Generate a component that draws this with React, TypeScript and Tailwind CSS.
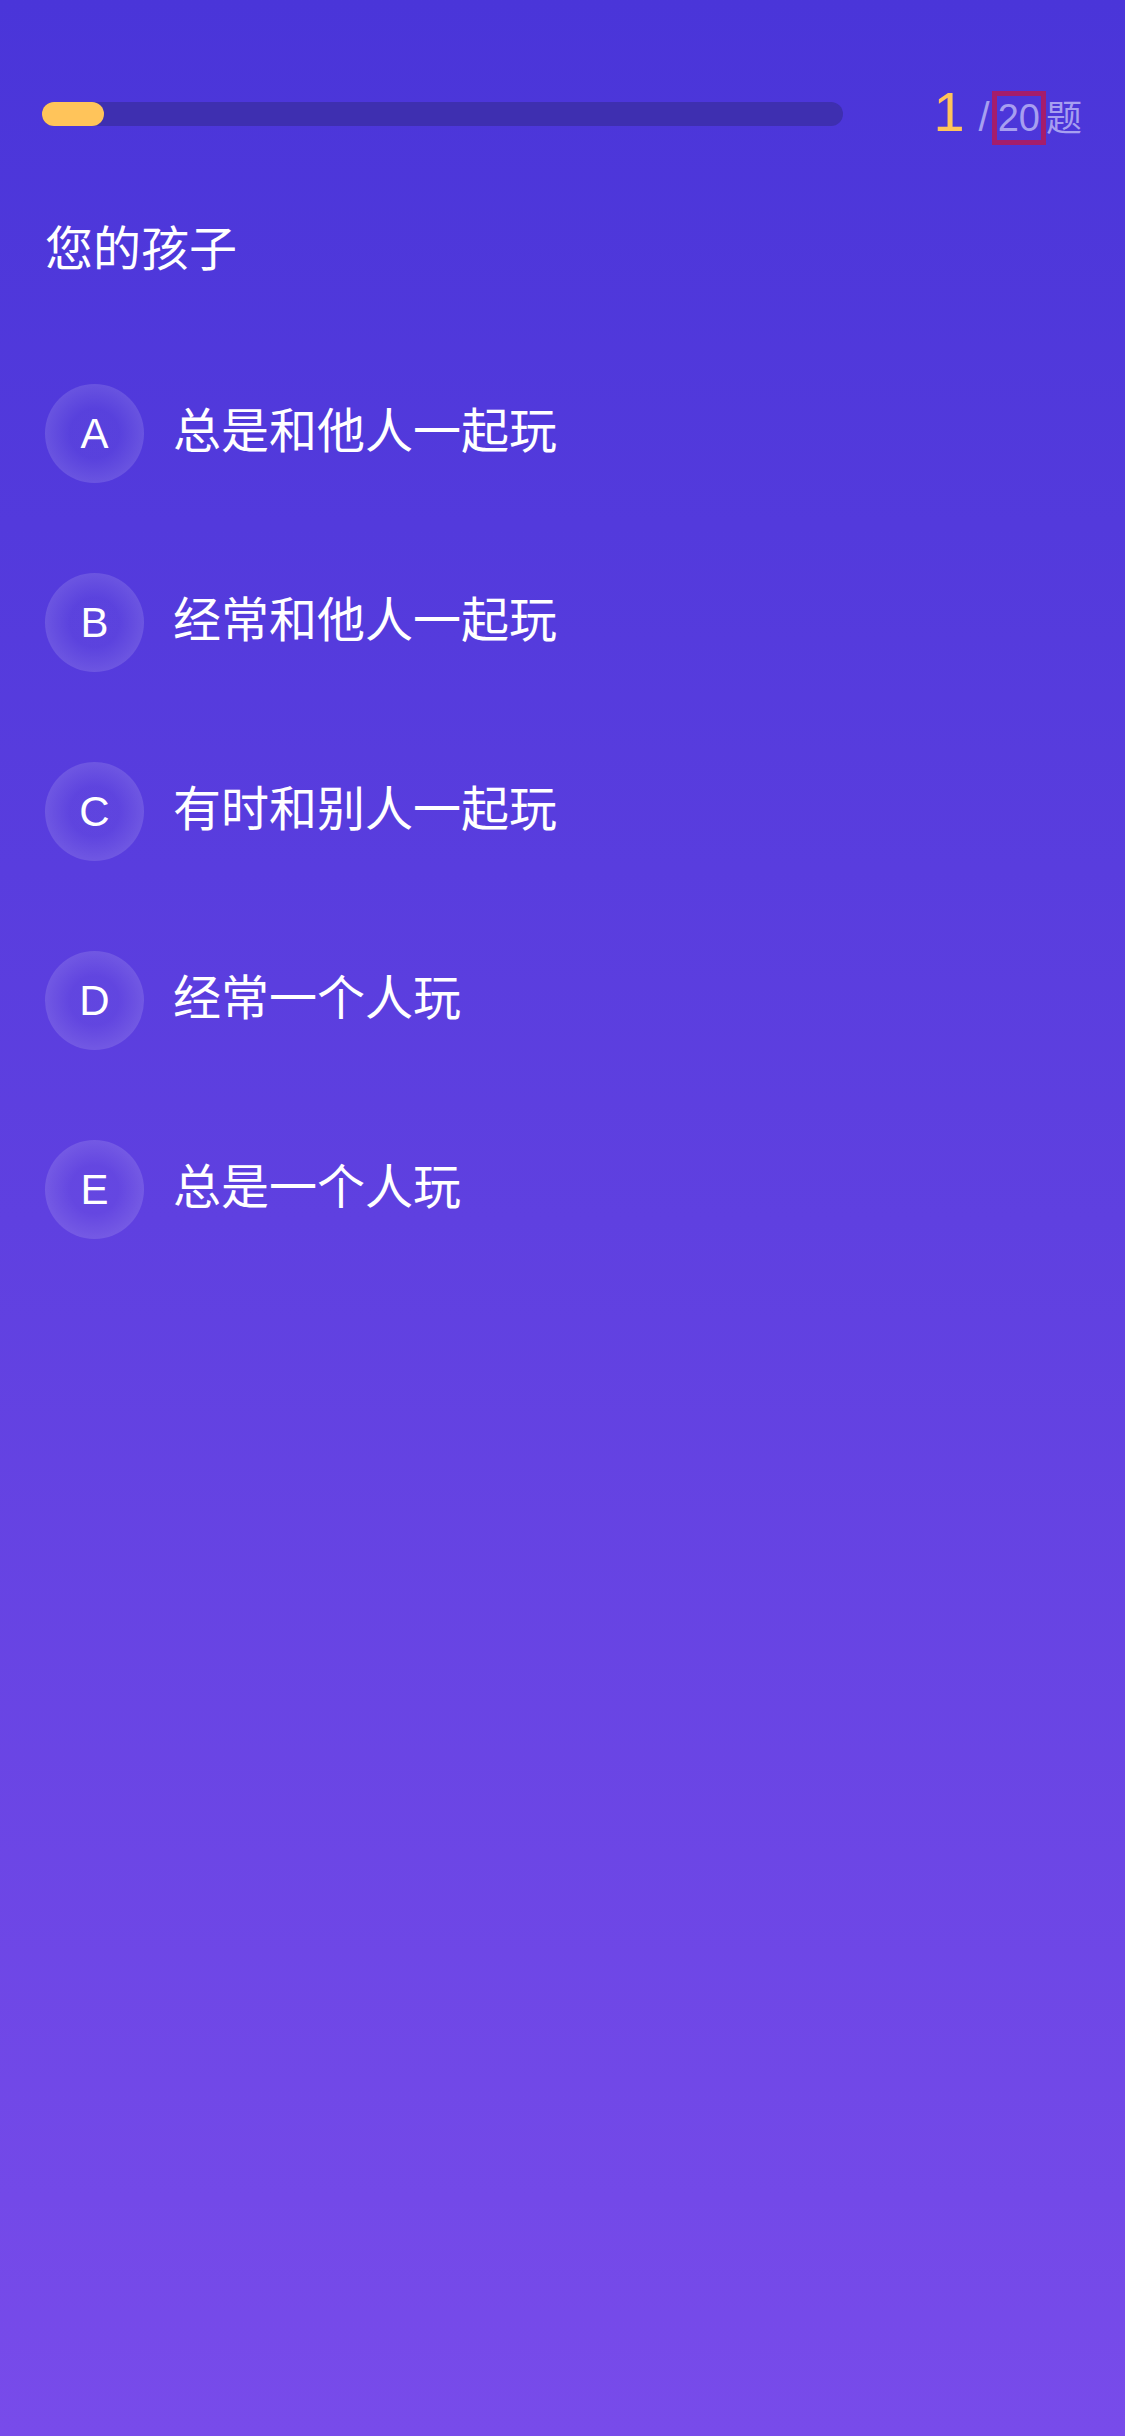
const options = [
  { key: "A", label: "总是和他人一起玩" },
  { key: "B", label: "经常和他人一起玩" },
  { key: "C", label: "有时和别人一起玩" },
  { key: "D", label: "经常一个人玩" },
  { key: "E", label: "总是一个人玩" },
];

function ProgressBar({ current, total }: { current: number; total: number }) {
  return (
    <div className="flex h-[60px] items-center justify-between">
      <div className="h-[24px] w-[801px] rounded-full bg-[#3e2fb0]">
        <div
          className="h-full rounded-full bg-[#ffc45a]"
          style={{ width: `${Math.max(62, (current / total) * 801)}px` }}
        />
      </div>
      <div className="flex items-baseline pr-[1px]">
        <span className="text-[56px] leading-none text-[#ffc45a]">{current}</span>
        <span className="ml-[14px] text-[40px] leading-none text-[#a79ff0]">/</span>
        <span className="ml-[2px] inline-block border-[5px] border-[#a51d6c] px-[1px] text-[38px] leading-[44px] text-[#a79ff0]">
          {total}
        </span>
        <span className="text-[36px] leading-none text-[#a79ff0]">题</span>
      </div>
    </div>
  );
}

function OptionRow({ k, label }: { k: string; label: string }) {
  return (
    <button className="flex items-center gap-[29px] text-left">
      <span className="flex h-[99px] w-[99px] items-center justify-center rounded-full bg-[radial-gradient(circle,rgba(255,255,255,0.04)_35%,rgba(255,255,255,0.15)_75%,rgba(255,255,255,0.32)_100%)] text-[42px] leading-none text-white">
        {k}
      </span>
      <span className="-mt-[3px] text-[48px] leading-[58px] text-white">{label}</span>
    </button>
  );
}

export default function App() {
  return (
    <div
      className="min-h-[2436px] w-full bg-gradient-to-b from-[#4a35d9] via-[#5f40e0] to-[#784bea] px-[42px] pt-[84px]"
      style={{ fontFamily: '"Liberation Sans", "Noto Sans CJK SC", sans-serif' }}
    >
      <ProgressBar current={1} total={20} />

      <h1 className="mt-[77px] pl-[3px] text-[48px] font-normal leading-[58px] text-white">您的孩子</h1>

      <div className="mt-[105px] flex flex-col gap-[90px] pl-[3px]">
        {options.map((o) => (
          <OptionRow key={o.key} k={o.key} label={o.label} />
        ))}
      </div>
    </div>
  );
}
